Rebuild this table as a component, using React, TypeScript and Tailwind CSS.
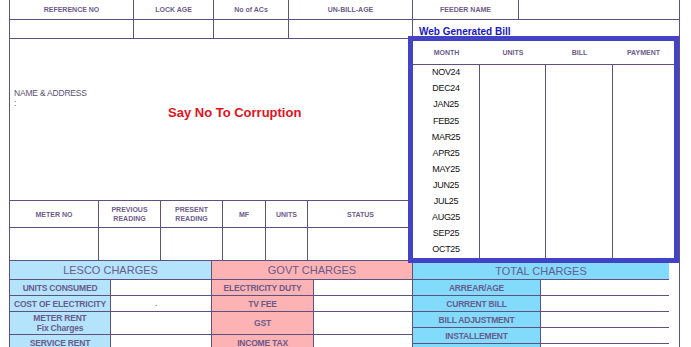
const line = "border-[#5f5080]";
const head = "font-bold text-[7px] leading-[9px] text-[#6d5c8c] text-center";
const lbl = "font-bold text-[8.5px] leading-[10px] text-[#6a5a8e] text-center tracking-[-0.2px]";

const months = ["NOV24", "DEC24", "JAN25", "FEB25", "MAR25", "APR25", "MAY25", "JUN25", "JUL25", "AUG25", "SEP25", "OCT25"];

const lesco = [
  { t: "UNITS CONSUMED", h: "h-[16px]" },
  { t: "COST OF ELECTRICITY", h: "h-[16px]", v: "." },
  { t: "METER RENT\nFix Charges", h: "h-[23px]" },
  { t: "SERVICE RENT", h: "h-[16px]" },
];

const govt = [
  { t: "ELECTRICITY DUTY", h: "h-[16px]" },
  { t: "TV FEE", h: "h-[16px]" },
  { t: "GST", h: "h-[23px]" },
  { t: "INCOME TAX", h: "h-[16px]" },
];

const totals = ["ARREAR/AGE", "CURRENT BILL", "BILL ADJUSTMENT", "INSTALLEMENT", ""];

export default function App() {
  return (
    <div className="h-[347px] w-[691px] overflow-hidden bg-white font-['Liberation_Sans',Arial,sans-serif]">
      <div className={`ml-[9px] w-[671px] border-l border-r ${line}`}>
        {/* header row */}
        <div className="flex h-[20px]">
          <div className={`w-[124px] border-r border-b ${line} flex items-center justify-center ${head}`}>REFERENCE NO</div>
          <div className={`w-[80px] border-r border-b ${line} flex items-center justify-center ${head}`}>LOCK AGE</div>
          <div className={`w-[75px] border-r border-b ${line} flex items-center justify-center ${head}`}>No of ACs</div>
          <div className={`w-[124px] border-r border-b ${line} flex items-center justify-center ${head}`}>UN-BILL-AGE</div>
          <div className={`w-[106px] border-r border-b ${line} flex items-center justify-center ${head}`}>FEEDER NAME</div>
          <div className={`flex-1 border-b ${line}`} />
        </div>
        <div className="flex h-[19px]">
          <div className={`w-[124px] border-r border-b ${line}`} />
          <div className={`w-[80px] border-r border-b ${line}`} />
          <div className={`w-[75px] border-r border-b ${line}`} />
          <div className={`w-[124px] border-r border-b ${line}`} />
          <div className="flex-1 pl-[6px] pt-[3px] flex items-center text-[10px] font-bold text-[#1717c8]">Web Generated Bill</div>
        </div>

        <div className="flex">
          {/* left side */}
          <div className="w-[403px]">
            <div className={`h-[162px] border-b ${line} flex`}>
              <div className="w-[158px] pl-[4px] pt-[49px] text-[8.5px] leading-[10px] text-[#5c5272] tracking-[-0.2px]">
                <div>NAME &amp; ADDRESS</div>
                <div>:</div>
              </div>
              <div className="pt-[66px] text-[13px] leading-[16px] font-bold text-[#e3121b]">Say No To Corruption</div>
            </div>

            <div className={`flex h-[27px] border-b ${line}`}>
              <div className={`w-[89px] border-r ${line} flex items-center justify-center ${head}`}>METER NO</div>
              <div className={`w-[62px] border-r ${line} flex items-center justify-center ${head}`}>PREVIOUS<br />READING</div>
              <div className={`w-[62px] border-r ${line} flex items-center justify-center ${head}`}>PRESENT<br />READING</div>
              <div className={`w-[43px] border-r ${line} flex items-center justify-center ${head}`}>MF</div>
              <div className={`w-[42px] border-r ${line} flex items-center justify-center ${head}`}>UNITS</div>
              <div className={`flex-1 flex items-center justify-center ${head}`}>STATUS</div>
            </div>
            <div className={`flex h-[33px] border-b ${line}`}>
              <div className={`w-[89px] border-r ${line}`} />
              <div className={`w-[62px] border-r ${line}`} />
              <div className={`w-[62px] border-r ${line}`} />
              <div className={`w-[43px] border-r ${line}`} />
              <div className={`w-[42px] border-r ${line}`} />
              <div className="flex-1" />
            </div>

            <div className="flex">
              <div className={`w-[202px] border-r ${line}`}>
                <div className={`h-[19px] border-b ${line} bg-[#b4e4fc] flex items-center justify-center text-[11px] text-[#6a5a8e]`}>LESCO CHARGES</div>
                {lesco.map((r) => (
                  <div key={r.t} className={`flex ${r.h} border-b ${line}`}>
                    <div className={`w-[101px] border-r ${line} bg-[#b4e4fc] flex items-center justify-center whitespace-pre ${lbl}`}>{r.t}</div>
                    <div className="flex-1 pl-[44px] text-[9px] leading-[14px] text-[#555]">{r.v}</div>
                  </div>
                ))}
              </div>
              <div className={`w-[201px] border-r ${line}`}>
                <div className={`h-[19px] border-b ${line} bg-[#fdb3b3] flex items-center justify-center text-[11px] text-[#6a5a8e]`}>GOVT CHARGES</div>
                {govt.map((r) => (
                  <div key={r.t} className={`flex ${r.h} border-b ${line}`}>
                    <div className={`w-[102px] border-r ${line} bg-[#fdb3b3] flex items-center justify-center ${lbl}`}>{r.t}</div>
                    <div className="flex-1" />
                  </div>
                ))}
              </div>
            </div>
          </div>

          {/* right side */}
          <div className="w-[266px]">
            <div className="relative -ml-[5px] -mt-[3px] w-[271px] h-[227px] border-[5px] border-[#4343c6] bg-white flex flex-col">
              <div className={`flex h-[24px] border-b ${line} shrink-0`}>
                <div className={`w-[67px] flex items-center justify-center ${head}`}>MONTH</div>
                <div className={`w-[66px] flex items-center justify-center ${head}`}>UNITS</div>
                <div className={`w-[67px] flex items-center justify-center ${head}`}>BILL</div>
                <div className={`flex-1 flex items-center justify-center ${head}`}>PAYMENT</div>
              </div>
              <div className="flex flex-1">
                <div className={`w-[67px] border-r ${line} flex flex-col`}>
                  {months.map((m) => (
                    <div key={m} className="flex-1 flex items-center justify-center text-[9px] tracking-[-0.3px] text-[#111]">{m}</div>
                  ))}
                </div>
                <div className={`w-[66px] border-r ${line}`} />
                <div className={`w-[67px] border-r ${line}`} />
                <div className="flex-1" />
              </div>
            </div>

            <div className="w-[256px]">
              <div className={`h-[17px] border-b ${line} bg-[#82dbfa] flex items-center justify-center text-[11px] text-[#6a5a8e]`}>TOTAL CHARGES</div>
              {totals.map((t, i) => (
                <div key={i} className={`flex h-[16px] border-b ${line}`}>
                  <div className={`w-[128px] border-r ${line} bg-[#82dbfa] flex items-center justify-center ${lbl}`}>{t}</div>
                  <div className="flex-1" />
                </div>
              ))}
            </div>
          </div>
        </div>
      </div>
    </div>
  );
}
